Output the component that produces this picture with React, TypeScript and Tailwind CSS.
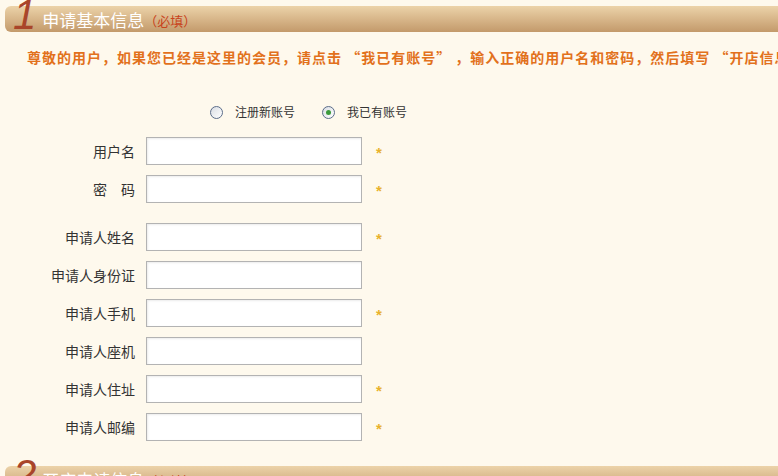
import React from "react";

const cjk = "font-['Noto_Sans_CJK_SC',sans-serif]";

function SectionBar({ num, title }: { num: string; title: string }) {
  return (
    <div className="ml-[5px] h-[26px] rounded-l-[6px] bg-gradient-to-b from-[#ecd3a9] to-[#c39a6b] flex items-center whitespace-nowrap">
      <span className="ml-[8px] -mt-[8px] text-[42px] leading-none italic text-[#a9452a] font-['Liberation_Sans',sans-serif]">
        {num}
      </span>
      <span className={`ml-[6px] text-[17px] leading-none text-white ${cjk}`}>{title}</span>
      <span className={`text-[13px] leading-none text-[#c8431c] mt-[2px] ${cjk}`}>（必填）</span>
    </div>
  );
}

function Radio({ checked, label }: { checked?: boolean; label: string }) {
  return (
    <div className="flex items-center">
      <div className="w-[13px] h-[13px] rounded-full border border-[#5b6d8a] bg-gradient-to-br from-[#d9dde3] to-white flex items-center justify-center">
        {checked && <div className="w-[5px] h-[5px] rounded-full bg-[#3b9a3b]" />}
      </div>
      <span className={`ml-[12px] text-[12px] text-[#333] ${cjk}`}>{label}</span>
    </div>
  );
}

function Row({ label, required }: { label: string; required?: boolean }) {
  return (
    <div className="flex items-center h-[28px] shrink-0">
      <div className={`w-[135px] text-right text-[14px] text-[#333] whitespace-pre ${cjk}`}>{label}</div>
      <input
        className="ml-[11px] w-[216px] h-[28px] bg-white border border-[#b3b3b3] shadow-[inset_1px_1px_2px_rgba(0,0,0,0.08)] outline-none"
        type="text"
      />
      {required && (
        <span className="ml-[14px] mt-[2px] text-[15px] leading-none font-bold text-[#e8b22c] font-['Liberation_Sans',sans-serif]">
          *
        </span>
      )}
    </div>
  );
}

export default function App() {
  return (
    <div className="w-[778px] h-[476px] overflow-hidden bg-[#fef9ed] flex flex-col">
      <div className="mt-[6px] shrink-0">
        <SectionBar num="1" title="申请基本信息" />
      </div>
      <div
        className={`shrink-0 mt-[15px] pl-[27px] h-[20px] leading-[20px] whitespace-nowrap overflow-hidden text-[14px] font-bold tracking-[1px] text-[#e2711c] ${cjk}`}
      >
        尊敬的用户，如果您已经是这里的会员，请点击 “我已有账号” ，输入正确的用户名和密码，然后填写 “开店信息” ，提交申请。
      </div>
      <div className="shrink-0 mt-[37px] pl-[210px] flex items-center gap-[27px] h-[16px]">
        <Radio label="注册新账号" />
        <Radio checked label="我已有账号" />
      </div>
      <div className="shrink-0 mt-[17px] flex flex-col gap-[10px]">
        <Row label="用户名" required />
        <Row label={"密　码"} required />
      </div>
      <div className="shrink-0 mt-[20px] flex flex-col gap-[10px]">
        <Row label="申请人姓名" required />
        <Row label="申请人身份证" />
        <Row label="申请人手机" required />
        <Row label="申请人座机" />
        <Row label="申请人住址" required />
        <Row label="申请人邮编" required />
      </div>
      <div className="shrink-0 mt-[25px]">
        <SectionBar num="2" title="开店申请信息" />
      </div>
    </div>
  );
}
